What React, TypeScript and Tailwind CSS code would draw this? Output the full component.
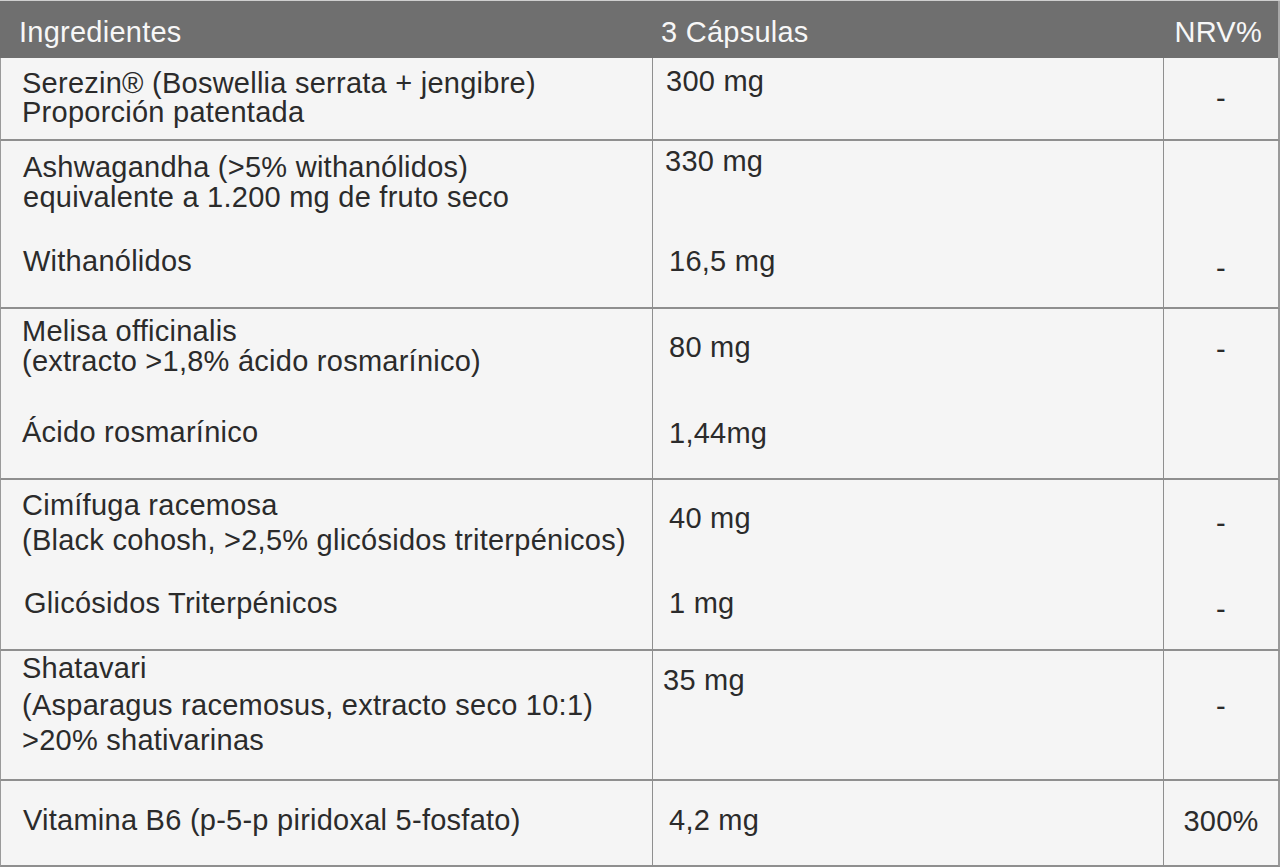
type Line = { t: string; c: string };
type Row = { h: string; a: Line[]; b: Line[]; n: Line[] };

const rows: Row[] = [
  {
    h: "h-[83px]",
    a: [
      { t: "Serezin® (Boswellia serrata + jengibre)", c: "mt-[10px]" },
      { t: "Proporción patentada", c: "mt-[-1px]" },
    ],
    b: [{ t: "300 mg", c: "mt-[8px] pl-[13px]" }],
    n: [{ t: "-", c: "mt-[25px]" }],
  },
  {
    h: "h-[168px]",
    a: [
      { t: "Ashwagandha (>5% withanólidos)", c: "mt-[11px] pl-[1px]" },
      { t: "equivalente a 1.200 mg de fruto seco", c: "mt-0 pl-[1px]" },
      { t: "Withanólidos", c: "mt-[34px] pl-[1px]" },
    ],
    b: [
      { t: "330 mg", c: "mt-[5px] pl-[12px]" },
      { t: "16,5 mg", c: "mt-[70px] pl-[16px]" },
    ],
    n: [{ t: "-", c: "mt-[112px]" }],
  },
  {
    h: "h-[171px]",
    a: [
      { t: "Melisa officinalis", c: "mt-[7px]" },
      { t: "(extracto >1,8% ácido rosmarínico)", c: "mt-0" },
      { t: "Ácido rosmarínico", c: "mt-[41px]" },
    ],
    b: [
      { t: "80 mg", c: "mt-[23px] pl-[16px]" },
      { t: "1,44mg", c: "mt-[56px] pl-[16px]" },
    ],
    n: [{ t: "-", c: "mt-[25px]" }],
  },
  {
    h: "h-[171px]",
    a: [
      { t: "Cimífuga racemosa", c: "mt-[10px]" },
      { t: "(Black cohosh, >2,5% glicósidos triterpénicos)", c: "mt-[5px]" },
      { t: "Glicósidos Triterpénicos", c: "mt-[33px] pl-[2px]" },
    ],
    b: [
      { t: "40 mg", c: "mt-[23px] pl-[16px]" },
      { t: "1 mg", c: "mt-[55px] pl-[16px]" },
    ],
    n: [
      { t: "-", c: "mt-[28px]" },
      { t: "-", c: "mt-[56px]" },
    ],
  },
  {
    h: "h-[130px]",
    a: [
      { t: "Shatavari", c: "mt-[2px]" },
      { t: "(Asparagus racemosus, extracto seco 10:1)", c: "mt-[7px]" },
      { t: ">20% shativarinas", c: "mt-[5px]" },
    ],
    b: [{ t: "35 mg", c: "mt-[14px] pl-[10px]" }],
    n: [{ t: "-", c: "mt-[40px]" }],
  },
  {
    h: "h-[86px]",
    a: [{ t: "Vitamina B6 (p-5-p piridoxal 5-fosfato)", c: "mt-[24px] pl-[1px]" }],
    b: [{ t: "4,2 mg", c: "mt-[24px] pl-[16px]" }],
    n: [{ t: "300%", c: "mt-[25px]" }],
  },
];

function Lines({ items, cls }: { items: Line[]; cls: string }) {
  return (
    <>
      {items.map((l, i) => (
        <div key={i} className={`${l.c} ${cls} whitespace-nowrap`}>
          {l.t}
        </div>
      ))}
    </>
  );
}

export default function App() {
  return (
    <div className="w-[1280px] h-[868px] bg-white font-['Liberation_Sans',Arial,sans-serif] text-[29px] leading-[30px] tracking-[0.25px] text-[#2b2b2b]">
      <div className="flex h-[58px] border-t border-[#cfcfcf] bg-[#6f6f6f] text-[#f7f7f7]">
        <div className="w-[653px] pl-[19px] pt-[16px]">Ingredientes</div>
        <div className="w-[511px] pl-[8px] pt-[16px]">3 Cápsulas</div>
        <div className="flex-1 pr-[16px] pt-[16px] text-right border-r-2 border-[#a8a8a8]">NRV%</div>
      </div>
      {rows.map((r, i) => (
        <div
          key={i}
          className={`flex ${r.h} bg-[#f5f5f5] border-l border-r-2 border-b-2 border-l-[#9a9a9a] border-r-[#9a9a9a] border-b-[#8f8f8f]`}
        >
          <div className="w-[652px] pl-[21px] border-r border-[#8f8f8f]">
            <Lines items={r.a} cls="" />
          </div>
          <div className="w-[511px] border-r border-[#8f8f8f]">
            <Lines items={r.b} cls="" />
          </div>
          <div className="flex-1">
            <Lines items={r.n} cls="text-center" />
          </div>
        </div>
      ))}
    </div>
  );
}
